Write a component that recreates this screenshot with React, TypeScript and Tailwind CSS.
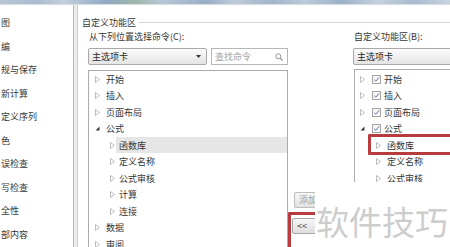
import React from "react";

const FONT = { fontFamily: '"Noto Sans CJK SC", "Noto Sans", sans-serif' };

function ArrowRight() {
  return (
    <svg width="5" height="7" viewBox="0 0 5 7" className="shrink-0">
      <path d="M0.5 0.5 L4.5 3.5 L0.5 6.5 Z" fill="none" stroke="#b4b4b4" strokeWidth="0.9" />
    </svg>
  );
}

function ArrowDown() {
  return (
    <svg width="5" height="7" viewBox="0 0 5 7" className="shrink-0">
      <path d="M4.5 1.5 L4.5 5.5 L0.5 5.5 Z" fill="#3a3a3a" />
    </svg>
  );
}

function Check() {
  return (
    <span className="w-[9px] h-[9px] shrink-0 border border-[#a4a4a4] bg-gradient-to-b from-[#f4f4f4] to-white flex items-center justify-center">
      <svg width="7" height="7" viewBox="0 0 7 7">
        <path d="M1 3.6 L2.8 5.3 L6 1.4" fill="none" stroke="#5a78a6" strokeWidth="1" />
      </svg>
    </span>
  );
}

function Combo({ text, className }: { text: string; className: string }) {
  return (
    <div
      className={
        "h-[17px] border border-[#a9a9a9] rounded-[2px] bg-gradient-to-b from-[#fbfbfb] to-[#e4e4e4] flex items-center pl-[3px] pr-[5px] text-[#2a2a2a] " +
        className
      }
    >
      <span className="flex-1 leading-none">{text}</span>
      <svg width="5" height="3" viewBox="0 0 5 3">
        <path d="M0 0 L5 0 L2.5 3 Z" fill="#333" />
      </svg>
    </div>
  );
}

const leftRows: { t: string; lvl: number; exp?: boolean; sel?: boolean }[] = [
  { t: "开始", lvl: 0 },
  { t: "插入", lvl: 0 },
  { t: "页面布局", lvl: 0 },
  { t: "公式", lvl: 0, exp: true },
  { t: "函数库", lvl: 1, sel: true },
  { t: "定义名称", lvl: 1 },
  { t: "公式审核", lvl: 1 },
  { t: "计算", lvl: 1 },
  { t: "连接", lvl: 1 },
  { t: "数据", lvl: 0 },
  { t: "审阅", lvl: 0 },
];

const rightRows: { t: string; lvl: number; exp?: boolean }[] = [
  { t: "开始", lvl: 0 },
  { t: "插入", lvl: 0 },
  { t: "页面布局", lvl: 0 },
  { t: "公式", lvl: 0, exp: true },
  { t: "函数库", lvl: 1 },
  { t: "定义名称", lvl: 1 },
  { t: "公式审核", lvl: 1 },
];

const sideItems = ["图", "编", "规与保存", "新计算", "定义序列", "色", "误检查", "写检查", "全性", "部内容"];

export default function App() {
  return (
    <div
      className="relative w-[450px] h-[247px] overflow-hidden bg-white text-[9px] text-[#363636] flex flex-col"
      style={FONT}
    >
      {/* blurred ribbon strip */}
      <div className="h-[5px] shrink-0 bg-[linear-gradient(90deg,#b9c7d6_0%,#aabbd0_8%,#c3cfdc_14%,#8fa9c4_24%,#9fb7a8_30%,#b7c6d6_36%,#98aec6_46%,#c0ccda_52%,#a2b5ca_60%,#bccada_68%,#9cb2c9_76%,#c4d0dc_84%,#a8bbcf_92%,#c8d3df_100%)] border-b border-[#d8dde3]" />

      <div className="flex flex-1 min-h-0">
        {/* left nav */}
        <div className="w-[74px] shrink-0 bg-white border-r border-[#b9b9b9] pt-[6px] flex flex-col">
          {sideItems.map((s) => (
            <div key={s} className="h-[23.5px] leading-[23.5px] pl-[1px] text-[#383838] whitespace-nowrap">
              {s}
            </div>
          ))}
        </div>
        <div className="w-[4px] shrink-0 bg-[#ededed] border-r border-[#cfcfcf]" />

        {/* content */}
        <div className="flex-1 min-w-0 bg-white flex flex-col">
          <div className="mt-[11px] h-[12px] flex items-center pl-[4px]">
            <span className="leading-none whitespace-nowrap">自定义功能区</span>
            <div className="flex-1 h-px bg-[#d6d6d6] ml-[3px]" />
          </div>

          <div className="flex pl-[10px] mt-[3px] flex-1 min-h-0">
            {/* left column */}
            <div className="w-[200px] shrink-0 flex flex-col">
              <div className="h-[12px] leading-[12px] pl-[1px] whitespace-nowrap">从下列位置选择命令(C):</div>
              <div className="flex mt-[5px] gap-[4px]">
                <Combo text="主选项卡" className="w-[119px]" />
                <div className="flex-1 h-[17px] border border-[#b7b7b7] bg-white flex items-center pl-[3px] pr-[4px]">
                  <span className="flex-1 text-[#a6a6a6] leading-none">查找命令</span>
                  <svg width="8" height="8" viewBox="0 0 8 8">
                    <circle cx="3.3" cy="3.3" r="2.5" fill="none" stroke="#8c8c8c" strokeWidth="0.9" />
                    <path d="M5.1 5.1 L7.5 7.5" stroke="#8c8c8c" strokeWidth="1.1" />
                  </svg>
                </div>
              </div>
              <div className="mt-[5px] flex-1 border border-[#ababab] border-b-0 bg-white flex flex-col">
                {leftRows.map((r) => (
                  <div
                    key={r.t}
                    className={"h-[16.5px] shrink-0 flex items-center " + (r.lvl === 0 ? "pl-[6px]" : "pl-[21px]")}
                  >
                    {r.exp ? <ArrowDown /> : <ArrowRight />}
                    {r.sel ? (
                      <span className="ml-[1px] flex-1 h-[16px] bg-[#e6e6e6] flex items-center pl-[3px]">{r.t}</span>
                    ) : (
                      <span className={r.lvl === 0 ? "ml-[6px]" : "ml-[4px]"}>{r.t}</span>
                    )}
                  </div>
                ))}
              </div>
            </div>

            {/* middle buttons */}
            <div className="w-[65px] shrink-0 flex flex-col pt-[161px]">
              <div className="ml-[6px] w-[58px] h-[16px] border border-[#bdbdbd] rounded-[2px] bg-gradient-to-b from-[#f6f6f6] to-[#e2e2e2] flex items-center pl-[4px] text-[#a0a0a0]">
                添加
              </div>
              <div className="ml-[4px] mt-[10px] w-[60px] h-[16px] border border-[#a9a9a9] rounded-[2px] bg-gradient-to-b from-[#f6f6f6] to-[#dedede] flex items-center pl-[4px] text-[#444]">
                &lt;&lt;
              </div>
            </div>

            {/* right column */}
            <div className="flex-1 min-w-0 flex flex-col">
              <div className="h-[12px] leading-[12px] pl-[1px] whitespace-nowrap">自定义功能区(B):</div>
              <div className="mt-[5px] flex">
                <Combo text="主选项卡" className="w-[120px] shrink-0" />
              </div>
              <div className="mt-[4px] ml-[1px] w-[130px] flex-1 border border-[#ababab] border-b-0 border-r-0 bg-white flex flex-col pt-[1px]">
                {rightRows.map((r) => (
                  <div
                    key={r.t}
                    className={"h-[16.5px] shrink-0 flex items-center " + (r.lvl === 0 ? "pl-[5px]" : "pl-[21px]")}
                  >
                    {r.exp ? <ArrowDown /> : <ArrowRight />}
                    {r.lvl === 0 ? (
                      <>
                        <span className="ml-[7px]">
                          <Check />
                        </span>
                        <span className="ml-[3px]">{r.t}</span>
                      </>
                    ) : (
                      <span className="ml-[6px]">{r.t}</span>
                    )}
                  </div>
                ))}
              </div>
            </div>
          </div>
        </div>
      </div>

      {/* red annotation boxes */}
      <div className="absolute left-[368px] top-[134px] w-[100px] h-[21px] border-[3px] border-[#b83b3d] rounded-[1px]" />
      <div className="absolute left-[288px] top-[212px] w-[50px] h-[50px] border-[3px] border-[#b83b3d] rounded-[1px]" />

      {/* watermark */}
      <div className="absolute left-[315px] top-[182px] w-[140px] h-[70px] bg-white flex items-center pl-[1px] pt-[8px]">
        <span className="text-[33px] leading-none text-[#cdcdcd] whitespace-nowrap">软件技巧</span>
      </div>
    </div>
  );
}
